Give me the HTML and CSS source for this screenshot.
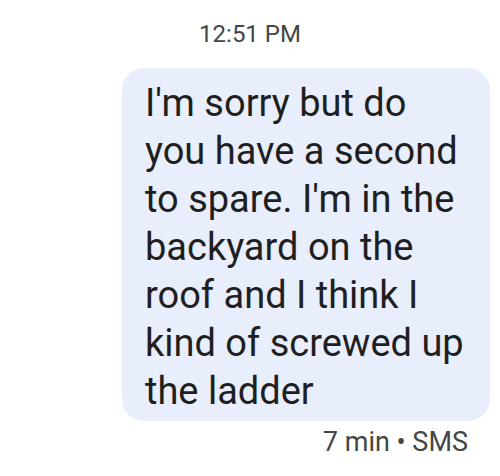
FILE: index.html
```html
<!DOCTYPE html>
<html lang="en">
<head>
  <meta charset="UTF-8" />
  <title>Message</title>
  <link rel="stylesheet" href="styles.css">
</head>
<body>
<div class="thread">
  <div class="timestamp">12:51 PM</div>
  <div class="msg-row">
    <div class="bubble">I'm sorry but do you have a second to spare. I'm in the backyard on the roof and I think I kind of screwed up the ladder</div>
  </div>
  <div class="meta">7 min • SMS</div>
</div>
</body>
</html>
```

FILE: styles.css
```css
* { box-sizing: border-box; }
body {
  margin: 0;
  background: #fff;
  font-family: Roboto, 'Noto Sans', sans-serif;
  color: #1f1f1f;
}
.thread {
  width: 500px;
  height: 476px;
  padding: 19px 10px 0 0;
  display: flex;
  flex-direction: column;
}
.timestamp {
  text-align: center;
  font-size: 24px;
  line-height: 30px;
  color: #444746;
  margin-left: 10px;
}
.msg-row {
  display: flex;
  justify-content: flex-end;
  margin-top: 19px;
}
.bubble {
  width: 368px;
  background: #e8eefb;
  border-radius: 22px;
  padding: 11px 20px 6px 23px;
  font-size: 38px;
  line-height: 48px;
}
.meta {
  text-align: right;
  font-size: 27px;
  line-height: 32px;
  color: #444746;
  margin-top: 5px;
  padding-right: 22px;
}
```
